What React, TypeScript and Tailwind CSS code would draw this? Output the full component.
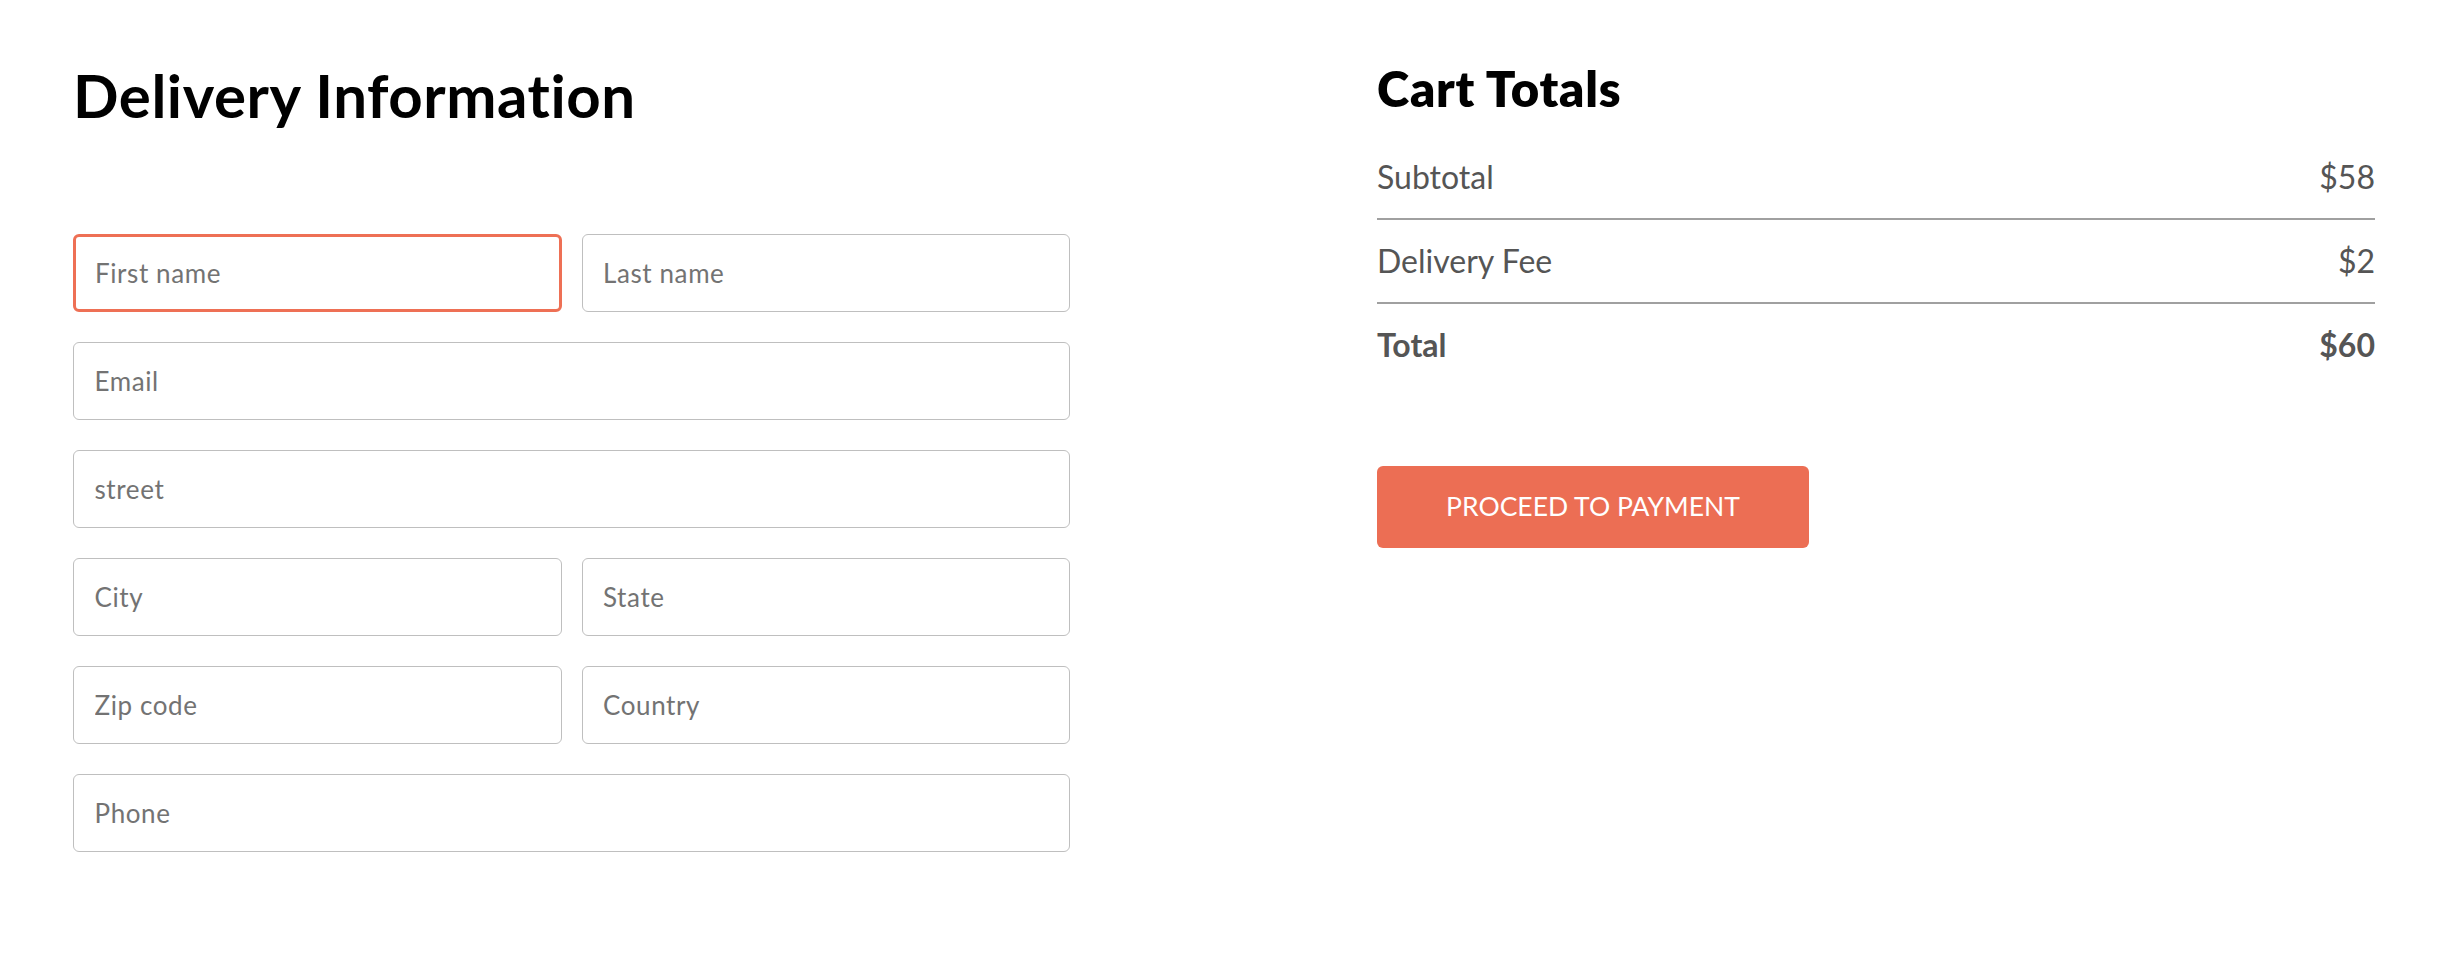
import React from "react";

const font = { fontFamily: "Lato, 'Noto Sans', sans-serif" };

function Field({ placeholder, focused }: { placeholder: string; focused?: boolean }) {
  return (
    <input
      placeholder={placeholder}
      className={
        focused
          ? "w-full h-[78px] rounded-[6px] border-[3px] border-[#ee7055] pl-[19px] text-[26px] tracking-[0.6px] text-black placeholder:text-[#737373] outline-none bg-white"
          : "w-full h-[78px] rounded-[6px] border-[1.5px] border-[#bfbfbf] pl-[20.5px] text-[26px] tracking-[0.6px] text-black placeholder:text-[#737373] outline-none bg-white"
      }
      style={font}
    />
  );
}

export default function App() {
  return (
    <div className="w-[2450px] h-[976px] bg-white flex justify-between pl-[73px] pr-[75px] pt-[59px]" style={font}>
      <div className="w-[997px] flex flex-col">
        <h1 className="text-[60px] leading-[72px] font-bold tracking-[0.55px] text-black mb-[103px]">Delivery Information</h1>
        <div className="flex flex-col gap-[30px]">
          <div className="grid grid-cols-2 gap-[20px]">
            <Field placeholder="First name" focused />
            <Field placeholder="Last name" />
          </div>
          <Field placeholder="Email" />
          <Field placeholder="street" />
          <div className="grid grid-cols-2 gap-[20px]">
            <Field placeholder="City" />
            <Field placeholder="State" />
          </div>
          <div className="grid grid-cols-2 gap-[20px]">
            <Field placeholder="Zip code" />
            <Field placeholder="Country" />
          </div>
          <Field placeholder="Phone" />
        </div>
      </div>
      <div className="w-[998px] flex flex-col">
        <h2 className="text-[49px] leading-[59px] font-extrabold tracking-[0.8px] text-black mb-[40px]">Cart Totals</h2>
        <div className="flex justify-between text-[32px] leading-[38px] text-[#555555]">
          <span>Subtotal</span>
          <span>$58</span>
        </div>
        <div className="h-[2px] bg-[#a0a0a0] my-[22px]" />
        <div className="flex justify-between text-[32px] leading-[38px] text-[#555555]">
          <span>Delivery Fee</span>
          <span>$2</span>
        </div>
        <div className="h-[2px] bg-[#a0a0a0] my-[22px]" />
        <div className="flex justify-between text-[32px] leading-[38px] text-[#555555] font-bold">
          <span>Total</span>
          <span>$60</span>
        </div>
        <button className="mt-[102px] w-[432px] h-[82px] rounded-[6px] bg-[#ec6e54] text-white text-[26.5px]" style={font}>
          PROCEED TO PAYMENT
        </button>
      </div>
    </div>
  );
}
